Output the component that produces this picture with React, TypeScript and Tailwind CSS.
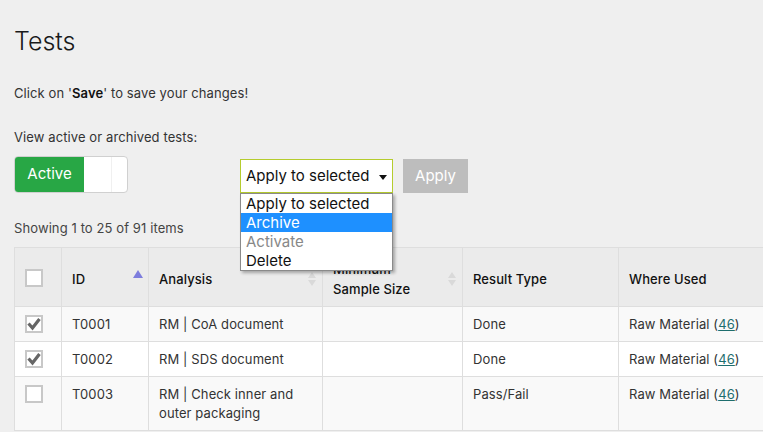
import React from "react"

interface Row {
  id: string
  analysis: string
  sample: string
  result: string
  checked: boolean
}

const ROWS: Row[] = [
  { id: "T0001", analysis: "RM | CoA document", sample: "", result: "Done", checked: true },
  { id: "T0002", analysis: "RM | SDS document", sample: "", result: "Done", checked: true },
  { id: "T0003", analysis: "RM | Check inner and outer packaging", sample: "", result: "Pass/Fail", checked: false },
]

function Check({ checked }: { checked: boolean }) {
  return (
    <span className="flex h-[18px] w-[18px] items-center justify-center border-2 border-[#c8c8c8] bg-white">
      {checked && (
        <svg viewBox="0 0 14 14" className="h-[14px] w-[14px]">
          <path d="M1.5 6.5 L5.5 11 L12.5 2" fill="none" stroke="#666" strokeWidth="3.2" />
        </svg>
      )}
    </span>
  )
}

function SortBoth() {
  return (
    <svg viewBox="0 0 10 16" className="h-[16px] w-[10px]">
      <path d="M5 1 L9 7 L1 7 Z" fill="#d9d9d9" />
      <path d="M5 15 L9 9 L1 9 Z" fill="#d9d9d9" />
    </svg>
  )
}

export default function App() {
  return (
    <div className="h-[432px] w-[763px] overflow-hidden bg-[#efefef] font-['Inter',sans-serif] text-[#222]">
      <div className="pl-[14px] pt-[26px]">
        <h1 className="text-[25px] leading-[30px] font-light text-[#1a1a1a]">Tests</h1>
        <p className="mt-[29px] text-[13px] leading-[16px] tracking-[0.1px] text-[#333]">
          Click on '<span className="font-semibold text-[#111]">Save</span>' to save your changes!
        </p>
        <p className="mt-[28px] text-[13px] leading-[16px] tracking-[0.1px] text-[#333]">View active or archived tests:</p>

        <div className="mt-[11px] flex items-start">
          <div className="flex h-[37px] w-[114px] overflow-hidden rounded-[4px] border border-[#d0d0d0] bg-white">
            <div className="flex w-[69px] items-center justify-center bg-[#28a745] text-[15px] text-white">Active</div>
            <div className="w-[27px]" />
            <div className="w-px bg-[#f0f0f0]" />
          </div>

          <div className="relative ml-[112px] mt-[3px]">
            <div className="flex h-[34px] w-[153px] items-center justify-between border border-[#b5cc2e] bg-white pl-[5px] pr-[5px] text-[15px] text-[#111]">
              <span>Apply to selected</span>
              <svg viewBox="0 0 8 5" className="mt-[2px] h-[5px] w-[8px]">
                <path d="M0 0 L8 0 L4 5 Z" fill="#111" />
              </svg>
            </div>
            <div className="absolute left-0 top-[34px] z-10 w-[153px] border border-[#8a8a8a] bg-white text-[15px] leading-[19px] shadow-[2px_2px_3px_rgba(0,0,0,0.3)]">
              <div className="px-[5px] text-[#111]">Apply to selected</div>
              <div className="bg-[#1e90ff] px-[5px] text-white">Archive</div>
              <div className="px-[5px] text-[#888]">Activate</div>
              <div className="px-[5px] text-[#111]">Delete</div>
            </div>
          </div>

          <button className="ml-[10px] mt-[3px] h-[34px] w-[65px] bg-[#bdbdbd] text-[15px] text-white">Apply</button>
        </div>

        <p className="mt-[27px] text-[13px] leading-[16px] tracking-[0.1px] text-[#444]">Showing 1 to 25 of 91 items</p>

        <table className="mt-[11px] w-[800px] border-collapse text-[13px] leading-[19px] tracking-[0.1px]">
          <thead>
            <tr className="h-[59px] bg-[#ebebeb] text-left text-[#111]">
              <th className="w-[47px] border border-[#dedede] pl-[10px] pt-[2px] font-medium">
                <Check checked={false} />
              </th>
              <th className="w-[87px] border border-[#dedede] pl-[10px] pr-[5px] pt-[4px] font-medium">
                <div className="flex items-center justify-between">
                  <span>ID</span>
                  <svg viewBox="0 0 10 8" className="mb-[10px] h-[8px] w-[10px]">
                    <path d="M5 0 L10 8 L0 8 Z" fill="#7d7ddd" />
                  </svg>
                </div>
              </th>
              <th className="w-[174px] border border-[#dedede] pl-[10px] pr-[5px] pt-[4px] font-medium">
                <div className="flex items-center justify-between">
                  <span>Analysis</span>
                  <SortBoth />
                </div>
              </th>
              <th className="w-[140px] border border-[#dedede] pl-[10px] pr-[5px] pt-[4px] font-medium">
                <div className="flex items-center justify-between">
                  <span className="leading-[20px]">
                    Minimum
                    <br />
                    Sample Size
                  </span>
                  <SortBoth />
                </div>
              </th>
              <th className="w-[156px] border border-[#dedede] px-[10px] pt-[4px] font-medium">Result Type</th>
              <th className="border border-[#dedede] px-[10px] pt-[4px] font-medium">Where Used</th>
            </tr>
          </thead>
          <tbody className="text-[#333]">
            {ROWS.map((r, i) => (
              <tr key={r.id} className={i % 2 === 0 ? "bg-[#f9f9f9]" : "bg-white"}>
                <td className="border border-[#dedede] pl-[10px] pt-[8px] pb-[7px] align-top">
                  <Check checked={r.checked} />
                </td>
                <td className="border border-[#dedede] px-[10px] pt-[8px] pb-[7px] align-top">{r.id}</td>
                <td className="border border-[#dedede] px-[10px] pt-[8px] pb-[7px] align-top">{r.analysis}</td>
                <td className="border border-[#dedede] px-[10px] pt-[8px] pb-[7px] align-top">{r.sample}</td>
                <td className="border border-[#dedede] px-[10px] pt-[8px] pb-[7px] align-top">{r.result}</td>
                <td className="border border-[#dedede] px-[10px] pt-[8px] pb-[7px] align-top">
                  Raw Material (<a className="text-[#1e6e6e] underline">46</a>)
                </td>
              </tr>
            ))}
          </tbody>
        </table>
      </div>
    </div>
  )
}
